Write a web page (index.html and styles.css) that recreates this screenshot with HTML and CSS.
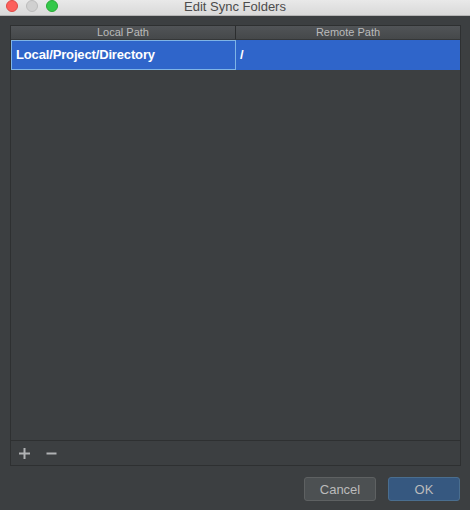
FILE: index.html
```html
<!DOCTYPE html>
<html>
<head>
<meta charset="utf-8">
<link rel="stylesheet" href="styles.css">
</head>
<body>
<div class="window">
  <div class="titlebar">
    <div class="lights">
      <span class="light red"></span>
      <span class="light gray"></span>
      <span class="light green"></span>
    </div>
    <div class="title">Edit Sync Folders</div>
  </div>
  <div class="content">
    <div class="table">
      <div class="thead">
        <div class="th col-local">Local Path</div>
        <div class="th col-remote">Remote Path</div>
      </div>
      <div class="row selected">
        <div class="td col-local focused">Local/Project/Directory</div>
        <div class="td col-remote">/</div>
      </div>
      <div class="spacer"></div>
      <div class="toolbar">
        <svg class="tool" width="11" height="11" viewBox="0 0 11 11"><path d="M5.5 0V11M0 5.5H11" stroke="#b0b2b4" stroke-width="2"/></svg>
        <svg class="tool" width="11" height="11" viewBox="0 0 11 11"><path d="M0.5 5.5H10.5" stroke="#b0b2b4" stroke-width="2"/></svg>
      </div>
    </div>
    <div class="buttons">
      <button class="btn cancel">Cancel</button>
      <button class="btn ok">OK</button>
    </div>
  </div>
</div>
</body>
</html>
```
FILE: styles.css
```css
html, body {
  margin: 0;
  padding: 0;
  background: #3c3f41;
}
.window {
  width: 470px;
  height: 510px;
  display: flex;
  flex-direction: column;
  font-family: "Liberation Sans", Arial, sans-serif;
  overflow: hidden;
}
.titlebar {
  height: 15px;
  flex: none;
  position: relative;
  background: linear-gradient(#e9e9e9, #d9d9d9);
  border-bottom: 1px solid #b5b5b5;
}
.lights {
  position: absolute;
  left: 6px;
  top: -0.5px;
  display: flex;
  gap: 8px;
}
.light {
  width: 12px;
  height: 12px;
  border-radius: 50%;
  box-sizing: border-box;
}
.red { background: #fc605c; border: 1px solid #de4a45; }
.gray { background: #d0d0d0; border: 1px solid #bcbcbc; }
.green { background: #34c84a; border: 1px solid #27aa35; }
.title {
  text-align: center;
  font-size: 13px;
  line-height: 14px;
  color: #4c4c4c;
}
.content {
  flex: 1;
  display: flex;
  flex-direction: column;
  padding: 9px 9px 9px 10px;
}
.table {
  height: 439px;
  border: 1px solid #2e3031;
  display: flex;
  flex-direction: column;
}
.thead {
  display: flex;
  height: 13px;
  background: linear-gradient(#515457, #45484a);
  border-bottom: 1px solid #353738;
}
.th {
  font-size: 11px;
  line-height: 13px;
  color: #bbbbbb;
  text-align: center;
}
.col-local { width: 224px; flex: none; }
.col-remote { flex: 1; }
.thead .col-local { border-right: 1px solid #2b2d2e; }
.row {
  display: flex;
  height: 30px;
}
.selected { background: #2f65ca; }
.td {
  font-size: 13px;
  font-weight: bold;
  color: #ffffff;
  line-height: 28px;
  padding-left: 4px;
  letter-spacing: -0.15px;
  box-sizing: border-box;
}
.row .col-local { width: 225px; }
.focused { border: 1px solid #7fb4e6; }
.row .col-remote { padding-left: 4px; line-height: 30px; }
.spacer { flex: 1; }
.toolbar {
  height: 24px;
  border-top: 1px solid #2e3031;
  display: flex;
  align-items: center;
  gap: 16px;
  padding-left: 8px;
}
.tool { display: block; }
.buttons {
  display: flex;
  justify-content: flex-end;
  gap: 12px;
  margin-top: 11px;
  padding-right: 1px;
}
.btn {
  width: 72px;
  height: 24px;
  border-radius: 3px;
  font-family: "Liberation Sans", Arial, sans-serif;
  font-size: 13px;
  color: #bbbbbb;
  padding: 0;
  box-sizing: border-box;
}
.cancel { background: #4c5052; border: 1px solid #5e6162; }
.ok { background: #365880; border: 1px solid #4a6e8f; }
```
